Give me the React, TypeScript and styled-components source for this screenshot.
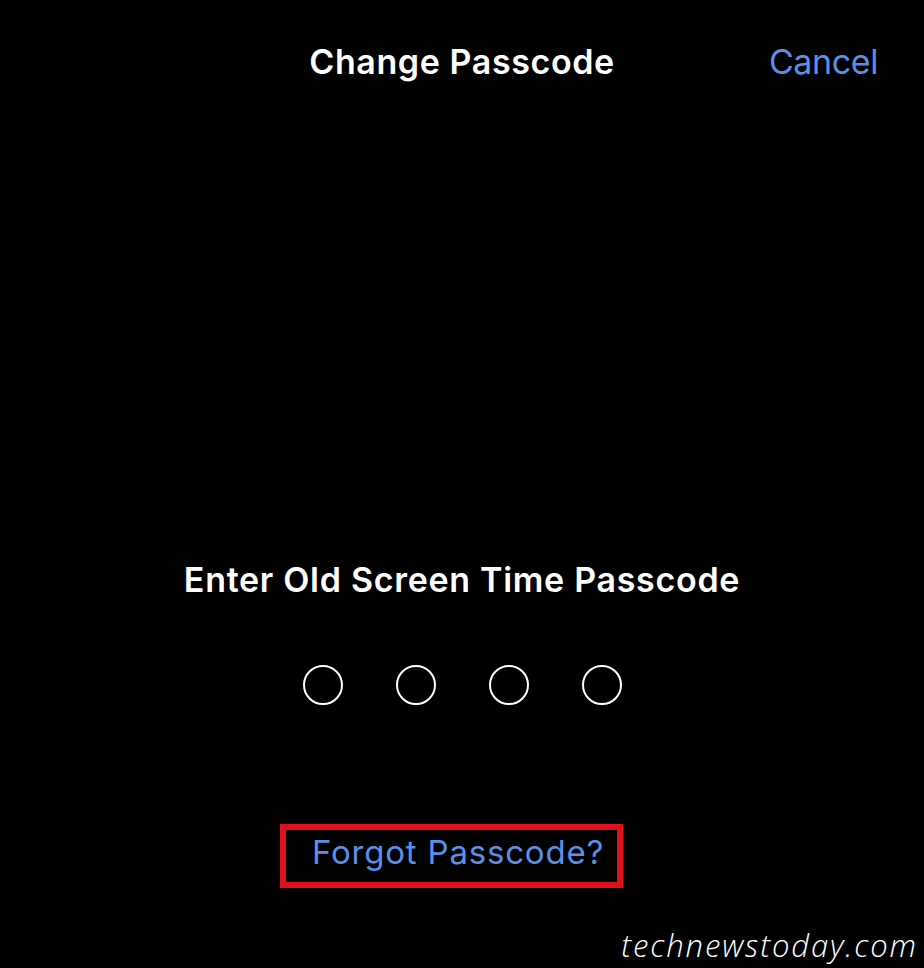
import React from "react";
import styled, { createGlobalStyle } from "styled-components";

const Global = createGlobalStyle`
  html, body { margin: 0; padding: 0; background: #000; }
  body { font-family: Inter, "Noto Sans", sans-serif; -webkit-font-smoothing: antialiased; }
`;

const Screen = styled.div`
  width: 924px;
  min-height: 968px;
  background: #000;
  display: flex;
  flex-direction: column;
  color: #fff;
`;

const Header = styled.header`
  display: grid;
  grid-template-columns: 1fr auto 1fr;
  align-items: center;
  padding: 42px 46px 0 46px;
  height: 40px;
`;

const Title = styled.h1`
  grid-column: 2;
  margin: 0;
  font-size: 34px;
  line-height: 40px;
  font-weight: 600;
  color: #fff;
  letter-spacing: 0.6px;
`;

const LinkButton = styled.span<{ $size: number; $track: number }>`
  font-size: ${(p) => p.$size}px;
  letter-spacing: ${(p) => p.$track}px;
  line-height: 40px;
  font-weight: 400;
  color: #5b8fe8;
`;

const CancelButton = styled(LinkButton)`
  grid-column: 3;
  justify-self: end;
`;

const Prompt = styled.h2`
  margin: 478px 0 0 0;
  text-align: center;
  font-size: 34px;
  line-height: 40px;
  font-weight: 600;
  color: #fff;
  letter-spacing: 0.7px;
`;

const Dots = styled.div`
  margin-top: 65px;
  display: flex;
  justify-content: center;
  gap: 53px;
`;

const Dot = styled.span`
  width: 40px;
  height: 40px;
  box-sizing: border-box;
  border: 2px solid #fff;
  border-radius: 50%;
`;

const ForgotRow = styled.div`
  margin-top: 119px;
  padding-left: 280px;
  display: flex;
`;

const Highlight = styled.div`
  box-sizing: border-box;
  width: 343px;
  height: 64px;
  border: 6px solid #e0111b;
  padding: 2px 0 0 26px;
  display: flex;
  align-items: flex-start;
`;

const Watermark = styled.div`
  margin-top: 39px;
  padding-right: 6px;
  text-align: right;
  font-family: "Open Sans", Lato, sans-serif;
  font-style: italic;
  font-weight: 300;
  font-size: 31px;
  line-height: 36px;
  color: #fff;
  letter-spacing: 1.9px;
`;

export default function App() {
  return (
    <>
      <Global />
      <Screen>
        <Header>
          <Title>Change Passcode</Title>
          <CancelButton $size={34} $track={-0.4}>Cancel</CancelButton>
        </Header>
        <Prompt>Enter Old Screen Time Passcode</Prompt>
        <Dots>
          <Dot />
          <Dot />
          <Dot />
          <Dot />
        </Dots>
        <ForgotRow>
          <Highlight>
            <LinkButton $size={33} $track={0.8}>Forgot Passcode?</LinkButton>
          </Highlight>
        </ForgotRow>
        <Watermark>technewstoday.com</Watermark>
      </Screen>
    </>
  );
}
